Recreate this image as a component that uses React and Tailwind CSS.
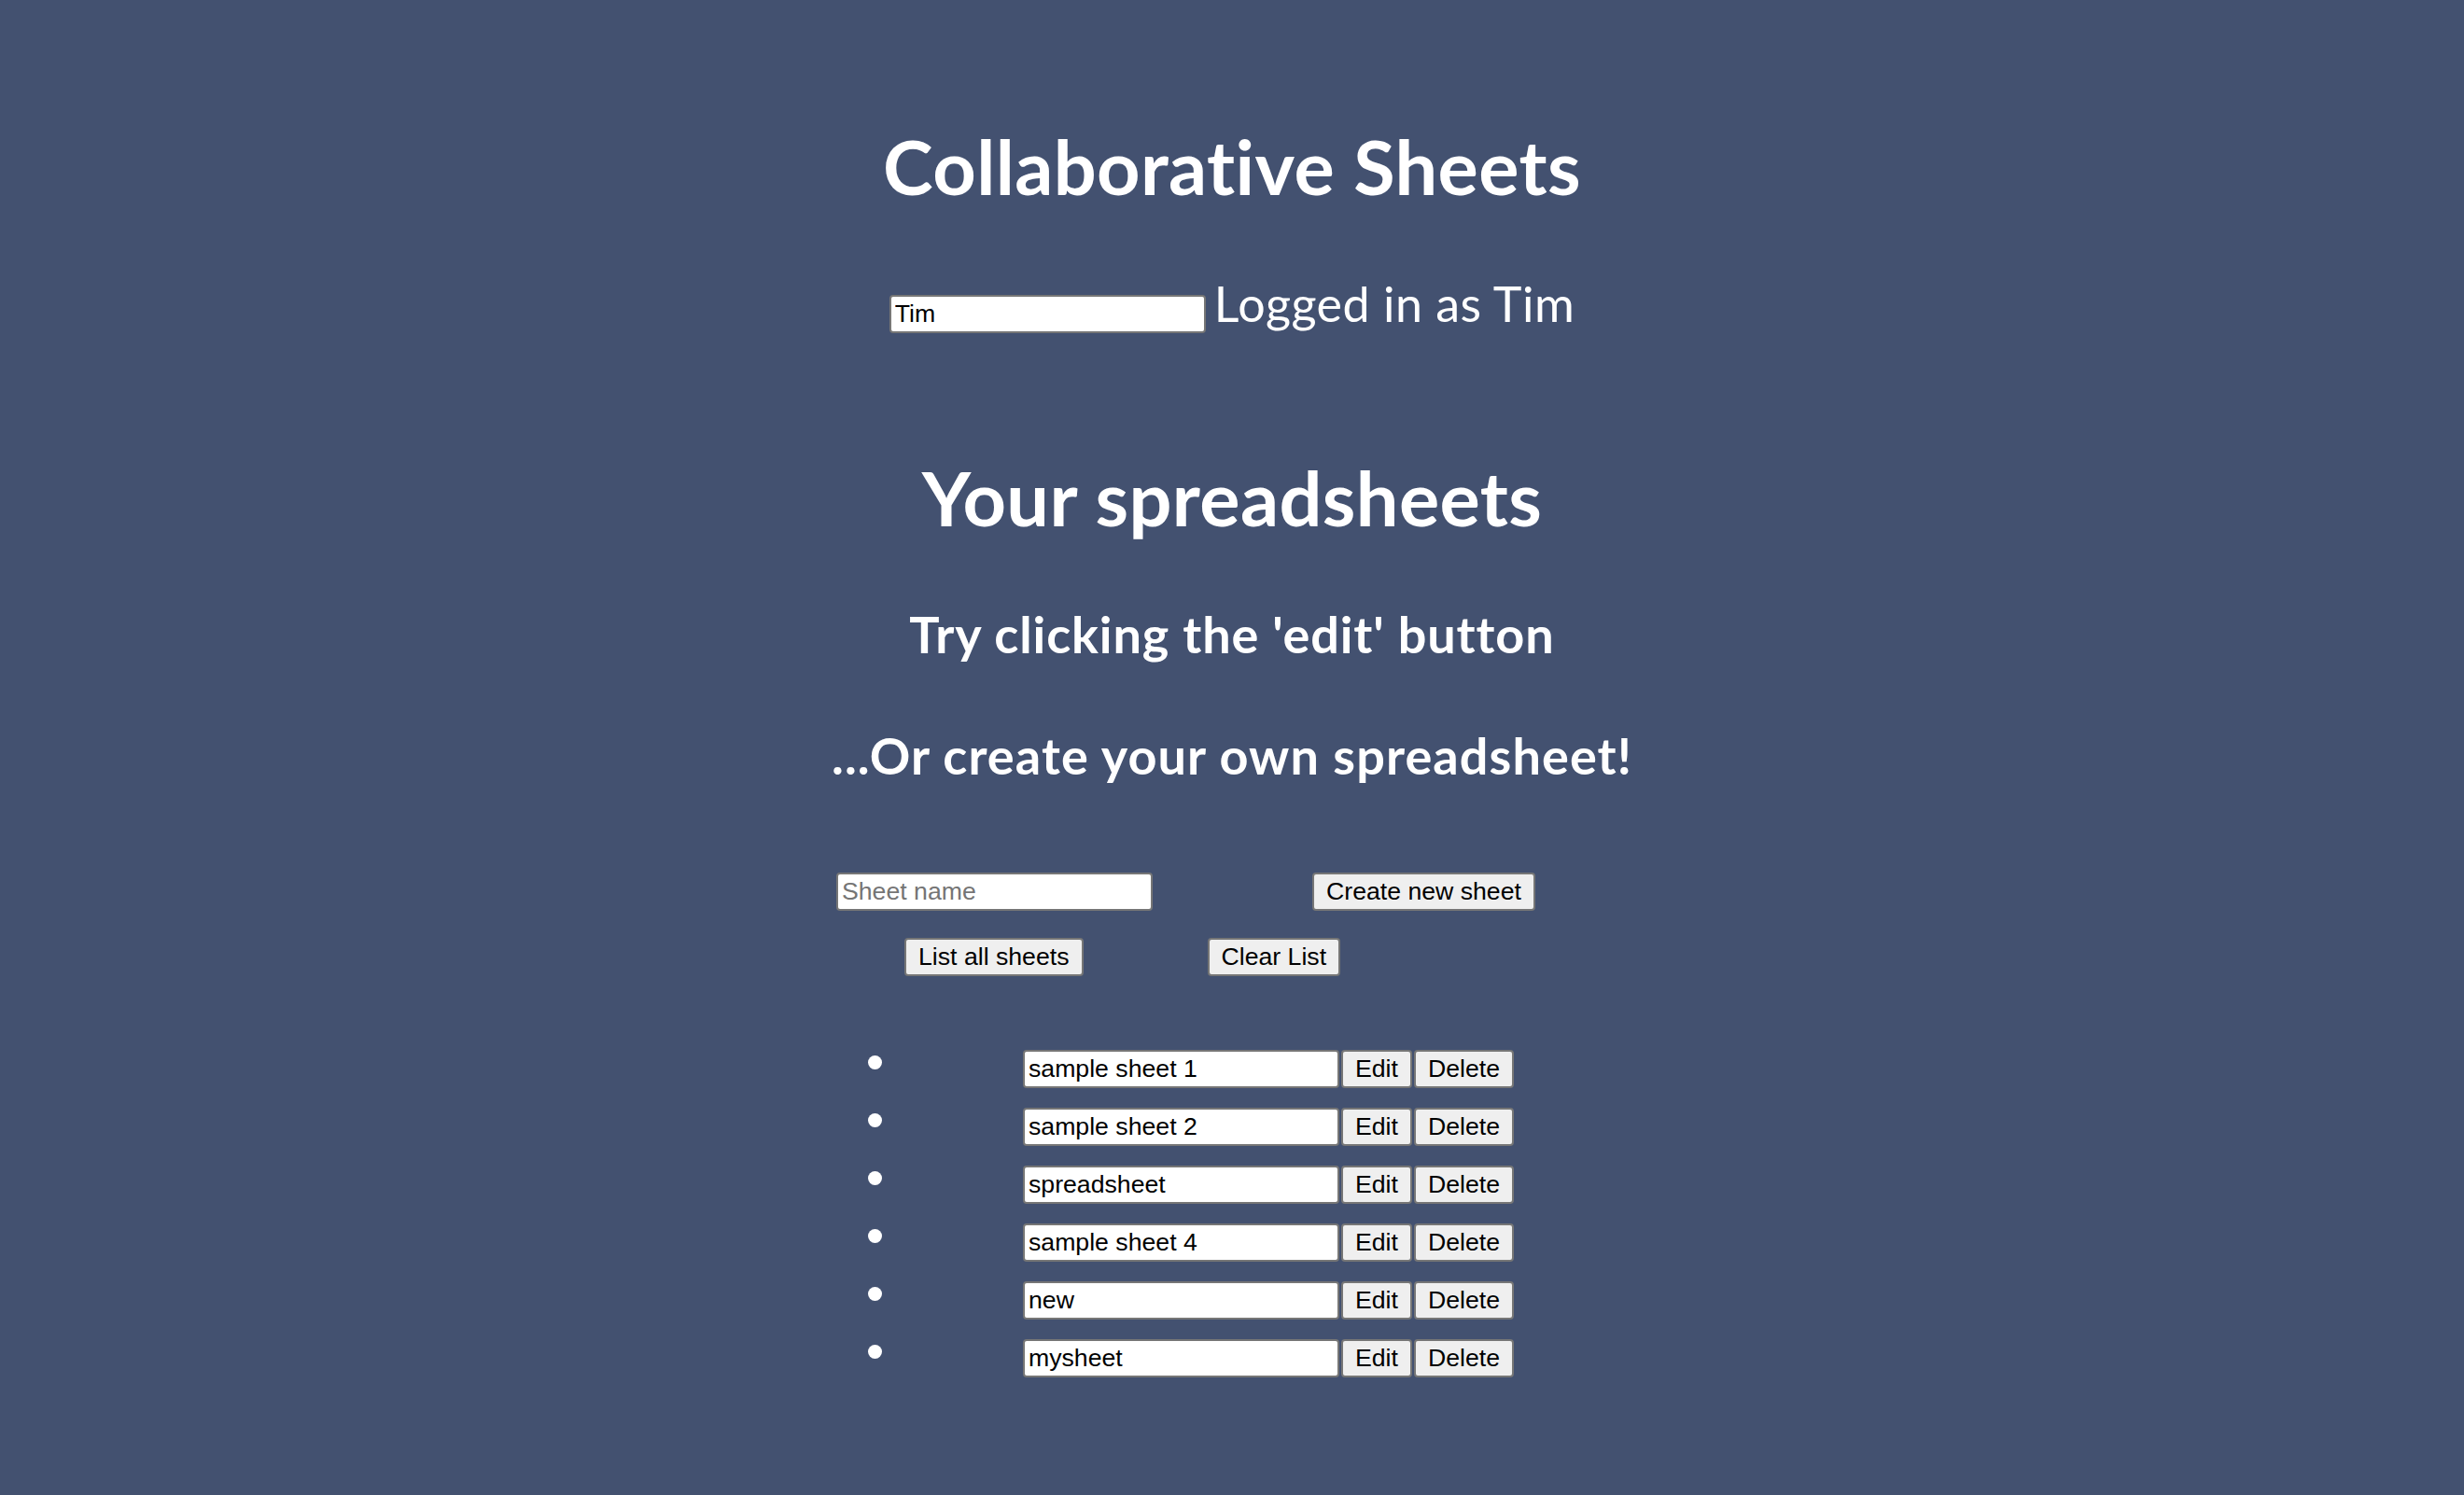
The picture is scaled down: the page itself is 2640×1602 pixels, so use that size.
import React from 'react'

const sheets = ['sample sheet 1', 'sample sheet 2', 'spreadsheet', 'sample sheet 4', 'new', 'mysheet']

const field =
  "h-[41px] w-[339px] bg-white text-black border-2 border-[#767676] rounded-[4px] px-[4px] font-['Liberation_Sans',Arial,sans-serif] text-[26.67px] outline-none placeholder:text-[#757575]"
const btn =
  "h-[41px] bg-[#efefef] text-black border-2 border-[#767676] rounded-[4px] px-[13px] font-['Liberation_Sans',Arial,sans-serif] text-[26.67px] leading-none"

export default function App() {
  return (
    <div className="min-h-[1602px] w-full bg-[#435170] text-white font-['Lato','Open_Sans',sans-serif] [font-variant-ligatures:none] overflow-hidden">
      {/* header */}
      <h1 className="pt-[130px] text-center text-[81px] leading-[96px] tracking-[0.4px] font-bold">Collaborative Sheets</h1>

      <div className="mt-[73px] flex items-baseline justify-center">
        <input className={field} defaultValue="Tim" />
        <span className="ml-[9px] text-[52px] leading-[52px] tracking-[0.5px]">Logged in as Tim</span>
      </div>

      <h1 className="mt-[128px] text-center text-[81px] leading-[96px] tracking-[0.4px] font-bold">Your spreadsheets</h1>
      <h2 className="mt-[68px] text-center text-[54px] leading-[62px] tracking-[0.9px] font-bold">Try clicking the 'edit' button</h2>
      <h2 className="mt-[68px] text-center text-[54px] leading-[62px] tracking-[1.1px] font-bold">...Or create your own spreadsheet!</h2>

      {/* controls */}
      <div className="mx-auto mt-[94px] w-[848px]">
        <div className="flex">
          <input className={field + ' w-[338px]'} placeholder="Sheet name" />
          <button className={btn + ' ml-[171px]'}>Create new sheet</button>
        </div>
        <div className="mt-[29px] flex pl-[73px]">
          <button className={btn}>List all sheets</button>
          <button className={btn + ' ml-[133px]'}>Clear List</button>
        </div>

        <ul className="mt-[79px] flex flex-col gap-[21px]">
          {sheets.map((name) => (
            <li key={name} className="flex items-start">
              <span className="ml-[34px] mt-[6px] h-[15px] w-[15px] rounded-full bg-white" />
              <div className="ml-[151px] flex gap-[2px]">
                <input className={field} defaultValue={name} />
                <button className={btn}>Edit</button>
                <button className={btn}>Delete</button>
              </div>
            </li>
          ))}
        </ul>
      </div>
    </div>
  )
}
